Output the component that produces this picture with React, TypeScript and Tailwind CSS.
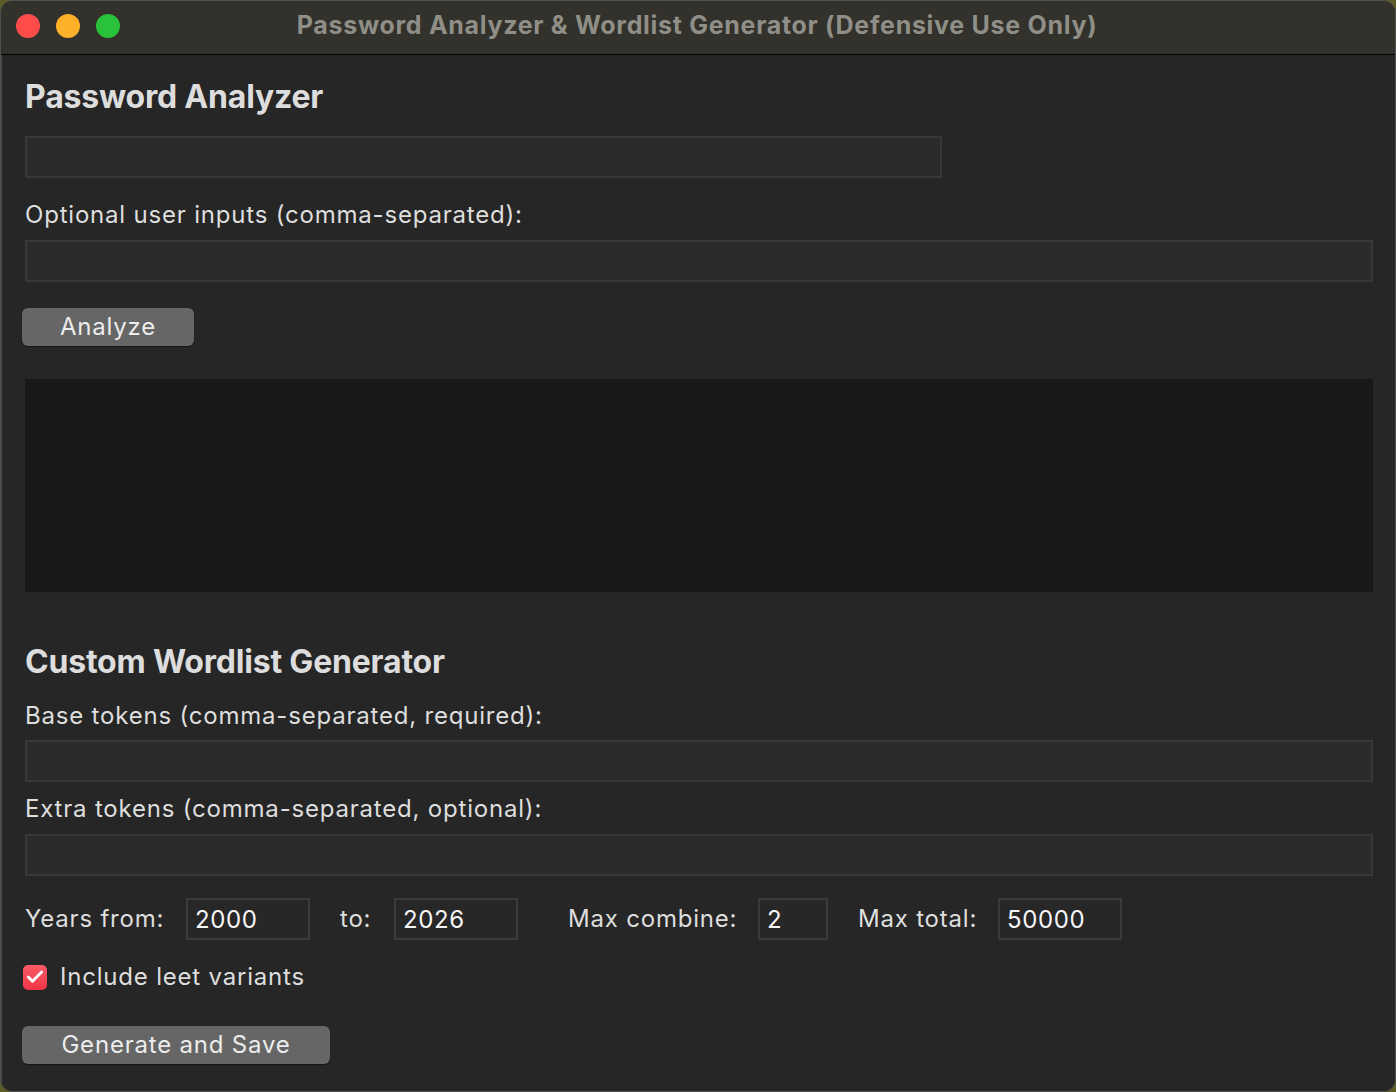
import { Check } from "lucide-react";

const FONT = { fontFamily: "Inter, 'Noto Sans', 'Liberation Sans', sans-serif" };

function TextField() {
  return (
    <input
      type="text"
      className="block h-[42px] w-full border-2 border-[#383838] bg-[#2b2b2b] px-2 text-[24px] text-[#f2f2f2] outline-none"
    />
  );
}

function NumField({ value, width }: { value: string; width: string }) {
  return (
    <input
      type="text"
      defaultValue={value}
      className={`block h-[42px] ${width} border-2 border-[#3a3a3a] bg-[#272727] pl-[7px] text-[24px] tracking-[0.6px] text-[#f6f6f6] outline-none`}
    />
  );
}

function Label({ children, className = "" }: { children: React.ReactNode; className?: string }) {
  return (
    <div className={`h-[30px] text-[24px] leading-[30px] tracking-[0.8px] text-[#dedede] ${className}`}>
      {children}
    </div>
  );
}

function GrayButton({ children, width }: { children: React.ReactNode; width: string }) {
  return (
    <button
      type="button"
      className={`-ml-[3px] block h-[38px] ${width} rounded-[6px] bg-[#666666] text-center text-[24px] leading-[38px] tracking-[0.8px] text-[#ececec] shadow-[0_1px_1px_rgba(0,0,0,0.45)]`}
    >
      {children}
    </button>
  );
}

export default function App() {
  return (
    <div className="h-[1092px] w-[1396px] bg-[#5d5c24]" style={FONT}>
      <div className="flex h-full w-full flex-col overflow-hidden rounded-[12px] border border-[#505050]">
        {/* Title bar */}
        <div className="relative flex h-[53px] shrink-0 items-center bg-[#32312b]">
          <div className="absolute left-[15px] top-[13px] flex gap-[16px]">
            <span className="h-[24px] w-[24px] rounded-full bg-[#fe4c4b]" />
            <span className="h-[24px] w-[24px] rounded-full bg-[#fdb12a]" />
            <span className="h-[24px] w-[24px] rounded-full bg-[#29c23a]" />
          </div>
          <div className="-mt-[3px] w-full pr-[2px] text-center text-[25px] font-bold tracking-[0.7px] text-[#8f8e87]">
            Password Analyzer &amp; Wordlist Generator (Defensive Use Only)
          </div>
        </div>
        <div className="h-px shrink-0 bg-black" />

        {/* Body */}
        <div className="flex-1 border-l border-[#4a4a4a] bg-[#262626] pl-[23px] pr-[22px] pt-[22px]">
          <h1 className="h-[40px] text-[32px] font-bold leading-[40px] tracking-[-0.2px] text-[#dddddd]">
            Password Analyzer
          </h1>
          <div className="mt-[19px] w-[917px]">
            <TextField />
          </div>
          <Label className="mt-[22px]">Optional user inputs (comma-separated):</Label>
          <div className="mt-[10px]">
            <TextField />
          </div>
          <div className="mt-[26px]">
            <GrayButton width="w-[172px]">Analyze</GrayButton>
          </div>
          <div className="mt-[33px] h-[213px] w-full bg-[#181818]" />

          <h2 className="mt-[50px] h-[40px] text-[32px] font-bold leading-[40px] tracking-[-0.2px] text-[#dddddd]">
            Custom Wordlist Generator
          </h2>
          <Label className="mt-[19px]">Base tokens (comma-separated, required):</Label>
          <div className="mt-[9px]">
            <TextField />
          </div>
          <Label className="mt-[12px]">Extra tokens (comma-separated, optional):</Label>
          <div className="mt-[10px]">
            <TextField />
          </div>

          <div className="mt-[22px] flex h-[42px] items-center text-[24px] tracking-[0.8px] text-[#dedede]">
            <span className="w-[161px]">Years from:</span>
            <NumField value="2000" width="w-[124px]" />
            <span className="ml-[30px] w-[54px]">to:</span>
            <NumField value="2026" width="w-[124px]" />
            <span className="ml-[50px] w-[190px]">Max combine:</span>
            <NumField value="2" width="w-[70px]" />
            <span className="ml-[30px] w-[140px]">Max total:</span>
            <NumField value="50000" width="w-[124px]" />
          </div>

          <div className="-ml-[2px] mt-[22px] flex h-[30px] items-center">
            <span className="flex h-[25px] w-[24px] items-center justify-center rounded-[5px] bg-gradient-to-b from-[#fb5a66] to-[#ee3447]">
              <Check size={20} strokeWidth={3.5} className="text-white" />
            </span>
            <span className="ml-[13px] text-[24px] tracking-[0.8px] text-[#dedede]">Include leet variants</span>
          </div>

          <div className="mt-[34px]">
            <GrayButton width="w-[308px]">Generate and Save</GrayButton>
          </div>
        </div>
      </div>
    </div>
  );
}
